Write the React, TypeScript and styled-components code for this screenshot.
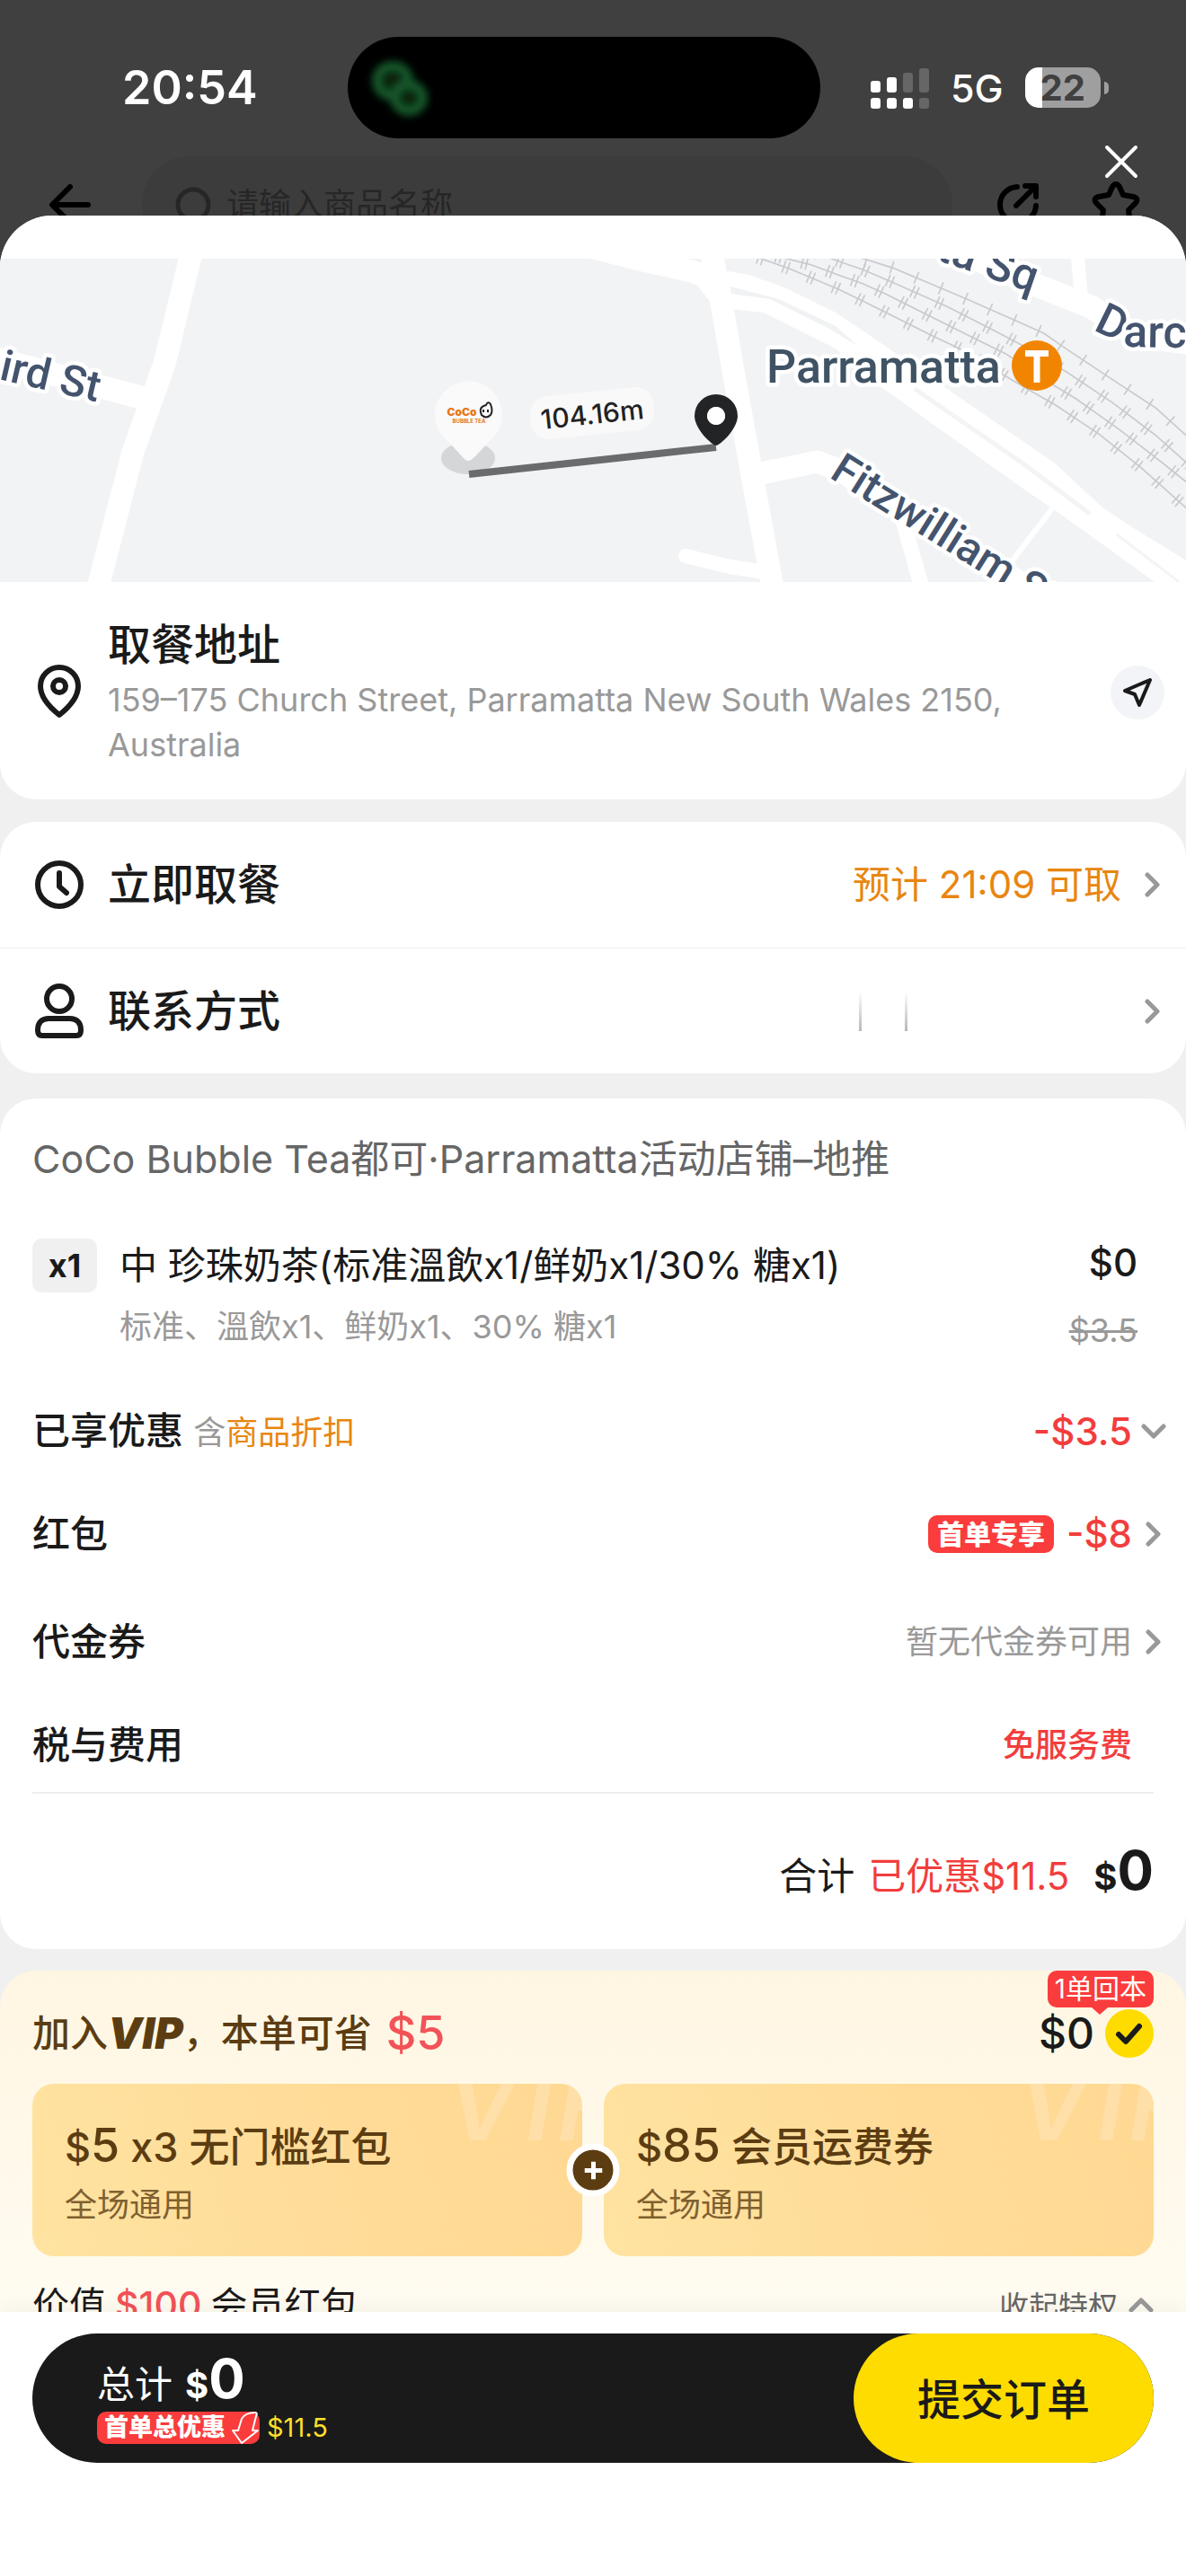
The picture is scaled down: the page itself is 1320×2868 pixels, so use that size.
import React from "react";
import styled, { createGlobalStyle, css } from "styled-components";

const ink = "#1a1a1a";
const muted = "#999999";
const red = "#f23d3d";
const tagRed = "#fa3c3c";
const brown = "#5c3d12";
const yellow = "#ffdc00";

const GlobalStyle = createGlobalStyle`
  * { box-sizing: border-box; }
  html, body { margin: 0; }
  body {
    background: #404040;
    color: ${ink};
    font-family: Inter, "Noto Sans CJK SC", sans-serif;
    -webkit-font-smoothing: antialiased;
  }
  button {
    border: 0;
    padding: 0;
    margin: 0;
    background: none;
    color: inherit;
    font: inherit;
    text-align: left;
    cursor: pointer;
  }
  p, h1, h2 { margin: 0; font: inherit; }
  svg { display: block; flex: none; }
`;

const Screen = styled.div`
  position: relative;
  display: flex;
  flex-direction: column;
  height: 100vh;
  overflow: hidden;
`;

/* ---------- dimmed page behind the sheet ---------- */

const Backdrop = styled.header`
  flex: none;
  height: 240px;
  overflow: hidden;
`;

const StatusBar = styled.div`
  display: grid;
  grid-template-columns: 1fr 526px 1fr;
  align-items: center;
  padding: 41px 20px 20px 0;
  color: #fff;
`;

const Clock = styled.time`
  padding-left: 136px;
  font-size: 52px;
  line-height: 60px;
  font-weight: 600;
`;

const Island = styled.div`
  display: flex;
  align-items: center;
  height: 113px;
  padding-left: 16px;
  border-radius: 57px;
  background: #000;
`;

const Signals = styled.div`
  display: flex;
  align-items: center;
  gap: 24px;
  padding-left: 56px;
`;

const Network = styled.span`
  font-size: 43px;
  line-height: 48px;
  font-weight: 500;
`;

const BatteryBox = styled.div`
  display: flex;
  align-items: center;
  gap: 4px;
`;

const Battery = styled.div`
  width: 84px;
  height: 45px;
  border-radius: 15px;
  background: linear-gradient(90deg, #fff 19px, #9f9f9f 19px);
  color: #404040;
  font-size: 40px;
  line-height: 45px;
  font-weight: 700;
  text-align: center;
`;

const BatteryTip = styled.span`
  width: 5px;
  height: 14px;
  border-radius: 0 7px 7px 0;
  background: #9f9f9f;
`;

const SearchBar = styled.div`
  display: flex;
  align-items: center;
  height: 108px;
  padding: 0 50px;
`;

const SearchBox = styled.label`
  flex: 1;
  display: flex;
  align-items: center;
  gap: 12px;
  height: 108px;
  margin: 0 44px 0 52px;
  padding-left: 36px;
  border-radius: 54px;
  background: #3c3c3c;
`;

const SearchInput = styled.input`
  flex: 1;
  min-width: 0;
  border: 0;
  padding: 0;
  outline: 0;
  background: none;
  font: inherit;
  font-size: 36px;
  line-height: 48px;
  color: #262626;
  &::placeholder { color: #262626; opacity: 1; }
`;

const HeaderTools = styled.div`
  display: flex;
  gap: 54px;
`;

const Close = styled.button`
  position: absolute;
  top: 156px;
  right: 48px;
`;

/* ---------- sheet ---------- */

const Sheet = styled.main`
  flex: 1;
  min-height: 0;
  display: flex;
  flex-direction: column;
  overflow: hidden;
  border-radius: 58px 58px 0 0;
  background: #f0f0f0;
`;

const Scroll = styled.div`
  flex: 1;
  min-height: 0;
  overflow-y: auto;
  scrollbar-width: none;
`;

const AddressCard = styled.section`
  padding-top: 48px;
  border-radius: 0 0 40px 40px;
  background: #fff;
`;

const MapSvg = styled.svg`
  width: 100%;
  height: 360px;
  background: #f2f3f5;
`;

const AddressRow = styled.div`
  display: flex;
  align-items: center;
  height: 242px;
  padding: 4px 24px 0 36px;
`;

const AddressText = styled.div`
  flex: 1;
  margin: 0 100px 0 24px;
`;

const Title = styled.h2`
  font-size: 48px;
  line-height: 60px;
  font-weight: 500;
`;

const Address = styled.p`
  margin-top: 6px;
  color: ${muted};
  font-size: 36px;
  line-height: 50px;
`;

const NavButton = styled.button`
  display: grid;
  place-items: center;
  width: 60px;
  height: 60px;
  border-radius: 50%;
  background: #f3f4f7;
`;

const Card = styled.section`
  margin-top: 25px;
  border-radius: 40px;
  background: #fff;
`;

const LinkRow = styled.button`
  display: flex;
  align-items: center;
  width: 100%;
  height: 140px;
  padding: 0 28px 0 36px;
  gap: 24px;
  & + & { border-top: 1px solid #f0f0f0; }
`;

const Pickup = styled.span`
  flex: 1;
  margin-right: 2px;
  color: #e8860f;
  font-size: 42px;
  line-height: 56px;
  text-align: right;
`;

const Contact = styled.span`
  flex: 1;
  display: flex;
  justify-content: flex-end;
  gap: 48px;
  padding-right: 240px;
`;

const Ghost = styled.i`
  width: 3px;
  height: 44px;
  background: linear-gradient(#fff, #b8b8b8);
`;

/* ---------- order ---------- */

const Order = styled(Card)`
  margin-top: 28px;
  padding: 37px 0 0;
`;

const Shop = styled.p`
  padding: 0 36px;
  color: #666;
  font-size: 43px;
  line-height: 60px;
`;

const Item = styled.div`
  display: flex;
  align-items: flex-start;
  padding: 59px 54px 32px 36px;
`;

const Count = styled.span`
  width: 72px;
  border-radius: 10px;
  background: #f0f0f0;
  font-size: 36px;
  line-height: 60px;
  font-weight: 700;
  text-align: center;
`;

const ItemText = styled.div`
  flex: 1;
  margin-left: 25px;
`;

const ItemName = styled.p`
  font-size: 42px;
  line-height: 60px;
`;

const ItemNote = styled.p`
  margin-top: 14px;
  color: ${muted};
  font-size: 36px;
  line-height: 48px;
`;

const ItemPrice = styled.div`
  text-align: right;
`;

const Price = styled.p`
  font-size: 42px;
  line-height: 54px;
  font-weight: 500;
`;

const OldPrice = styled.s`
  display: block;
  margin-top: 24px;
  color: ${muted};
  font-size: 36px;
  line-height: 48px;
`;

const rowBox = css<{ $h?: number }>`
  display: flex;
  align-items: center;
  width: 100%;
  height: ${(p) => p.$h ?? 114}px;
  padding: 0 20px 0 36px;
`;

const FeeButton = styled.button<{ $h?: number }>`${rowBox}`;
const FeeRow = styled.div<{ $h?: number }>`${rowBox}`;

const FeeName = styled.span`
  flex: 1;
  font-size: 42px;
  line-height: 56px;
  font-weight: 500;
`;

const FeeNote = styled.span<{ $accent?: boolean }>`
  color: ${(p) => (p.$accent ? "#e8860f" : muted)};
  font-size: 36px;
  font-weight: 400;
`;

const Minus = styled.span`
  color: ${red};
  font-size: 42px;
  line-height: 56px;
  font-weight: 500;
`;

const FeeValue = styled.span<{ $hot?: boolean }>`
  color: ${(p) => (p.$hot ? red : muted)};
  font-size: 36px;
  line-height: 48px;
  font-weight: ${(p) => (p.$hot ? 500 : 400)};
`;

const Slot = styled.span`
  display: grid;
  place-items: center;
  width: 32px;
  margin-left: 8px;
`;

const FirstTag = styled.span`
  margin-right: 14px;
  padding: 0 10px;
  border-radius: 10px;
  background: ${tagRed};
  color: #fff;
  font-size: 30px;
  line-height: 42px;
  font-weight: 900;
`;

const Rule = styled.hr`
  height: 2px;
  margin: 0 36px;
  border: 0;
  background: #eee;
`;

const Sum = styled.p`
  display: flex;
  align-items: baseline;
  justify-content: flex-end;
  gap: 15px;
  height: 173px;
  padding: 45px 36px 0;
  font-size: 42px;
  line-height: 80px;
`;

const Saved = styled.span`
  margin-right: 12px;
  color: ${red};
`;

const Amount = styled.span`
  font-size: 60px;
  font-weight: 700;
`;

const Dollar = styled.span<{ $size: number }>`
  font-size: ${(p) => p.$size}px;
`;

/* ---------- vip ---------- */

const Vip = styled.section`
  margin-top: 24px;
  padding: 0 36px;
  border-radius: 40px 40px 0 0;
  background: linear-gradient(#fff6e2, #fffcf2 400px);
`;

const VipHead = styled.div`
  position: relative;
  display: flex;
  align-items: center;
  height: 126px;
  padding-top: 14px;
`;

const VipTitle = styled.p`
  flex: 1;
  display: flex;
  align-items: center;
  color: ${brown};
  font-size: 42px;
  line-height: 56px;
  font-weight: 500;
`;

const VipMark = styled.b`
  font-size: 48px;
  font-weight: 900;
  font-style: italic;
`;

const VipSave = styled.span`
  margin-left: 16px;
  color: #f25358;
  font-size: 52px;
`;

const VipPrice = styled.span`
  margin-right: 12px;
  font-size: 48px;
  line-height: 48px;
  font-weight: 500;
`;

const Check = styled.span`
  display: grid;
  width: 54px;
  height: 54px;
  & > * { grid-area: 1 / 1; }
`;

const CheckInput = styled.input`
  appearance: none;
  width: 54px;
  height: 54px;
  margin: 0;
  border-radius: 50%;
  background: ${yellow};
`;

const CheckMark = styled.svg`
  place-self: center;
  pointer-events: none;
  z-index: 1;
`;

const Payback = styled.span`
  position: absolute;
  top: 0;
  right: 0;
  padding: 0 8px;
  border-radius: 10px;
  background: ${tagRed};
  color: #fff;
  font-size: 30px;
  line-height: 41px;
  &::after {
    content: "";
    position: absolute;
    left: 49px;
    top: 100%;
    border: 9px solid transparent;
    border-top: 8px solid ${tagRed};
    border-bottom: 0;
  }
`;

const Coupons = styled.div`
  position: relative;
  display: grid;
  grid-template-columns: 1fr 1fr;
  gap: 24px;
`;

const Coupon = styled.article`
  position: relative;
  height: 192px;
  padding: 34px 36px;
  overflow: hidden;
  border-radius: 24px;
  background: linear-gradient(70deg, #ffe3a1, #ffdb97 60%, #ffd993);
  color: ${brown};
`;

const CouponName = styled.p`
  display: flex;
  align-items: baseline;
  font-size: 45px;
  line-height: 70px;
  font-weight: 500;
  white-space: pre;
`;

const CouponNote = styled.p`
  color: #80602f;
  font-size: 36px;
  line-height: 58px;
`;

const Watermark = styled.span`
  position: absolute;
  top: -54px;
  right: -54px;
  color: rgba(255, 230, 190, 0.5);
  font-size: 130px;
  line-height: 140px;
  font-weight: 500;
  font-style: italic;
`;

const Plus = styled.span`
  position: absolute;
  left: 50%;
  top: 50%;
  display: grid;
  place-items: center;
  width: 59px;
  height: 59px;
  transform: translate(-50%, -50%);
  border: 7px solid #fff;
  border-radius: 50%;
  background: ${brown};
`;

const Worth = styled.div`
  display: flex;
  align-items: center;
  height: 108px;
`;

const WorthText = styled.p`
  flex: 1;
  display: flex;
  gap: 10px;
  font-size: 41px;
  line-height: 56px;
`;

const Hundred = styled.span`
  color: #f25358;
  font-weight: 500;
`;

const Fold = styled.button`
  display: flex;
  align-items: center;
  gap: 12px;
  color: #666;
  font-size: 33px;
`;

/* ---------- footer ---------- */

const Footer = styled.footer`
  flex: none;
  position: relative;
  height: 294px;
  padding: 24px 36px;
  background: #fff;
  box-shadow: 0 -4px 24px rgba(0, 0, 0, 0.05);
`;

const Pill = styled.div`
  display: flex;
  justify-content: space-between;
  height: 144px;
  border-radius: 72px;
  background: ${ink};
  color: #fff;
`;

const Totals = styled.div`
  display: flex;
  flex-direction: column;
  padding: 17px 0 0 72px;
`;

const TotalLine = styled.p`
  display: flex;
  align-items: baseline;
  gap: 14px;
  height: 70px;
  font-size: 42px;
  line-height: 67px;
`;

const SavedLine = styled.p`
  display: flex;
  align-items: center;
  gap: 8px;
  color: #ffdf2b;
  font-size: 29px;
  line-height: 36px;
`;

const SavedTag = styled.span`
  display: flex;
  align-items: center;
  gap: 4px;
  height: 36px;
  padding-left: 8px;
  border-radius: 10px;
  background: ${tagRed};
  color: #fff;
  font-size: 27px;
  font-weight: 900;
`;

const Submit = styled.button`
  width: 334px;
  padding-bottom: 4px;
  border-radius: 72px;
  background: ${yellow};
  color: ${ink};
  font-size: 48px;
  font-weight: 500;
  text-align: center;
`;

const chevrons = {
  right: { w: 18, h: 28, d: "M3 3 L14 14 L3 25" },
  down: { w: 28, h: 18, d: "M3 3 L14 14 L25 3" },
  up: { w: 28, h: 18, d: "M3 15 L14 4 L25 15" },
};

function Chevron({ dir = "right" }: { dir?: keyof typeof chevrons }) {
  const { w, h, d } = chevrons[dir];
  return (
    <svg width={w} height={h} viewBox={`0 0 ${w} ${h}`} aria-hidden="true">
      <path d={d} fill="none" stroke="#999" strokeWidth="5" strokeLinecap="round" strokeLinejoin="round" />
    </svg>
  );
}

const signalBars = [
  { h: 13, top: "#fff", low: "#fff" },
  { h: 17, top: "#fff", low: "#fff" },
  { h: 22, top: "#666", low: "#fff" },
  { h: 27, top: "#666", low: "#666" },
];

function Signal() {
  return (
    <svg width="65" height="46" viewBox="0 0 65 46" aria-hidden="true">
      {signalBars.map((b, i) => (
        <g key={i}>
          <rect x={i * 18} y={28 - b.h} width="11" height={b.h} rx="3" fill={b.top} />
          <rect x={i * 18} y="34" width="11" height="12" rx="3" fill={b.low} />
        </g>
      ))}
    </svg>
  );
}

const rails = [
  { d: "M-160 -40 L0 8 L102 40 L350 145 L520 220 L605 258 L680 310 L830 410 L980 508 L1090 608", dash: "5 84" },
  { d: "M-170 -15 L-45 30 L0 45 L120 97 L285 170 L445 252 L570 318 L685 390 L835 490 L980 600 L1090 698", dash: "5 10 5 70" },
  { d: "M-290 0 L-170 30 L-90 60 L0 92 L77 127 L237 207 L398 287 L480 328 L640 433 L713 477 L858 580 L1000 690 L1090 762", dash: "5 10 5 69" },
  { d: "M-350 5 L-245 42 L-82 110 L0 150 L80 190 L240 270 L325 310 L475 400 L560 450 L640 495 L790 595 L930 707 L1090 850", dash: "5 10 5 70" },
];

function Map() {
  return (
    <MapSvg viewBox="0 0 1320 360" preserveAspectRatio="xMidYMid slice" role="img" aria-label="地图">
      <g fill="none" stroke="#fff" strokeLinejoin="round">
        <path d="M213 -6 L183 117 L148 215 L109 366" strokeWidth="25" />
        <path d="M-10 110 L170 158" strokeWidth="26" />
        <path d="M792 -6 L803 50 L817 130 L835 230 L860 366" strokeWidth="25" />
        <path d="M600 -28 L703 -1 L770 14 L812 30" strokeWidth="25" />
        <path d="M842 240 L910 226 L935 236 L1170 382" strokeWidth="25" />
        <path d="M1004 288 L1026 366" strokeWidth="17" />
        <path d="M1172 277 L1120 345" strokeWidth="6" />
        <path d="M763 331 L813 343 L850 349" strokeWidth="16" strokeLinecap="round" />
        <path d="M1040 -20 L1147 27 L1215 54 L1265 86 L1340 96" strokeWidth="26" />
        <path d="M1199 -6 L1204 48" strokeWidth="15" />
      </g>
      <path
        fill="#fff"
        d="M805 13 L833 18 L873 32 L930 60 L960 80 L1173 227 L1227 277 L1260 299 L1322 337 L1322 362 L1288 362 L1173 279 L1140 257 L960 128 L930 100 L850 60 L812 56 Z M774 27 L792 50 L804 27 Z"
      />
      <path fill="#f1f2f4" d="M813 31 L867 45 L930 75 L956 98 L923 78 L857 45 L814 39 Z" />
      <g fill="none" stroke="#f3f4f6">
        <path d="M1018 145 L1140 229 L1213 284" strokeWidth="5" />
        <path d="M1243 307 L1315 362" strokeWidth="3" />
      </g>
      <g transform="translate(960 -3) scale(0.3333)" fill="none" stroke="#c9cacd">
        {rails.map((r) => (
          <g key={r.d}>
            <path d={r.d} strokeWidth="5" />
            <path d={r.d} strokeWidth="42" strokeDasharray={r.dash} />
          </g>
        ))}
      </g>
      <g
        fontFamily="Roboto, sans-serif"
        fontWeight="500"
        fill="#44546e"
        stroke="#fff"
        strokeWidth="9"
        strokeLinejoin="round"
        paintOrder="stroke"
      >
        <text x="-2" y="134" fontSize="48" transform="rotate(13 -2 134)">ird St</text>
        <text x="853" y="138" fontSize="52" fill="#3f5364">Parramatta</text>
        <text x="922" y="243" fontSize="48" transform="rotate(32 922 243)">Fitzwilliam St</text>
        <text x="1149" y="38" fontSize="50" textAnchor="end" transform="rotate(19 1149 38)">ta Sq</text>
        <text x="1216" y="79" fontSize="50" transform="rotate(26 1216 79)">D</text>
        <text x="1250" y="98" fontSize="50" transform="rotate(1 1250 98)">arc</text>
      </g>
      <circle cx="1154" cy="119" r="28" fill="#f28500" />
      <path d="M1141 105.500 H1167 M1154 105.500 V138" fill="none" stroke="#fff" strokeWidth="7" />
      <ellipse cx="521" cy="222" rx="30" ry="18" fill="#d5d6d8" />
      <path d="M521 225 C516 225 508 211 492 197 A37.500 37.500 0 1 1 551 197 C536 211 527 225 521 225 Z" fill="#fafafa" />
      <path d="M522 240 L797 210" stroke="#6a6b6d" strokeWidth="8" />
      <g fontFamily="Inter, sans-serif" textAnchor="middle" fill="#e8761c">
        <text x="514" y="175" fontSize="12" fontWeight="900">CoCo</text>
        <text x="522" y="183" fontSize="6" fontWeight="700">BUBBLE TEA</text>
      </g>
      <g fill="none" stroke="#222" strokeWidth="2">
        <path d="M541 163 Q543 158 546 162 Q549 170 546 174 Q541 179 536 174 Q532 165 541 163 Z" />
        <path d="M538 168 v3 M543 168 v3" />
      </g>
      <g transform="rotate(-6 659 172)">
        <rect x="590" y="148" width="138" height="48" rx="20" fill="#f9f9fa" />
        <text x="659" y="184" fontFamily="Inter, sans-serif" fontSize="30" fontWeight="500" fill="#222" textAnchor="middle">
          104.16m
        </text>
      </g>
      <path
        fillRule="evenodd"
        fill="#232426"
        d="M797 208 C793 208 773 190 773 175 A24 24 0 1 1 821 175 C821 190 801 208 797 208 Z M797 165 a10 10 0 1 0 0.010 0 Z"
      />
      <circle cx="797" cy="175" r="10" fill="#fff" />
    </MapSvg>
  );
}

export default function App() {
  return (
    <Screen lang="zh-CN">
      <GlobalStyle />
      <Backdrop>
        <StatusBar>
          <Clock>20:54</Clock>
          <Island>
            <svg width="80" height="84" viewBox="0 0 80 84" aria-hidden="true">
              <defs>
                <filter id="soft" x="-30%" y="-30%" width="160%" height="160%">
                  <feGaussianBlur stdDeviation="4" />
                </filter>
              </defs>
              <g fill="#08240f" stroke="#12592a" strokeWidth="10" filter="url(#soft)">
                <ellipse cx="34" cy="34" rx="18" ry="17" />
                <ellipse cx="52" cy="53" rx="16" ry="15" />
              </g>
            </svg>
          </Island>
          <Signals>
            <Signal />
            <Network>5G</Network>
            <BatteryBox>
              <Battery>22</Battery>
              <BatteryTip />
            </BatteryBox>
          </Signals>
        </StatusBar>
        <SearchBar>
          <button aria-label="返回">
            <svg width="56" height="56" viewBox="0 0 56 56">
              <path d="M9 28 H48 M28 8 L8 28 L28 48" fill="none" stroke="#000" strokeWidth="6" strokeLinecap="round" strokeLinejoin="round" />
            </svg>
          </button>
          <SearchBox>
            <svg width="46" height="46" viewBox="0 0 46 46" aria-hidden="true">
              <circle cx="21" cy="23" r="17" fill="none" stroke="#262626" strokeWidth="5" />
            </svg>
            <SearchInput aria-label="搜索商品" placeholder="请输入商品名称" />
          </SearchBox>
          <HeaderTools>
            <button aria-label="分享">
              <svg width="56" height="56" viewBox="0 0 56 56">
                <path d="M28 8 A20 20 0 1 0 49 29 M27 29 L48 8 M37 7 H49 V19" fill="none" stroke="#000" strokeWidth="6" strokeLinecap="round" strokeLinejoin="round" />
              </svg>
            </button>
            <button aria-label="收藏">
              <svg width="56" height="56" viewBox="0 0 56 56">
                <path
                  d="M24 8 Q28 2 32 8 L36 17 L47 19 Q54 21 50 26 L42 34 L44 48 Q43 53 38 50 L28 45 L18 50 Q13 53 12 48 L14 34 L6 26 Q2 21 9 19 L20 17 Z"
                  fill="none"
                  stroke="#000"
                  strokeWidth="6"
                  strokeLinejoin="round"
                />
              </svg>
            </button>
          </HeaderTools>
        </SearchBar>
      </Backdrop>
      <Close aria-label="关闭">
        <svg width="48" height="48" viewBox="0 0 48 48">
          <path d="M8 8 L40 40 M40 8 L8 40" stroke="#fff" strokeWidth="4" strokeLinecap="round" />
        </svg>
      </Close>

      <Sheet>
        <Scroll>
          <AddressCard>
            <Map />
            <AddressRow>
              <svg width="60" height="64" viewBox="0 0 60 64" aria-hidden="true">
                <path d="M30 57 C20 49 9 37 9 25 A21 21 0 0 1 51 25 C51 37 40 49 30 57 Z" fill="none" stroke={ink} strokeWidth="6" strokeLinejoin="round" />
                <circle cx="30" cy="25" r="7" fill="none" stroke={ink} strokeWidth="6" />
              </svg>
              <AddressText>
                <Title>取餐地址</Title>
                <Address>159–175 Church Street, Parramatta New South Wales 2150, Australia</Address>
              </AddressText>
              <NavButton aria-label="导航">
                <svg width="36" height="36" viewBox="0 0 36 36">
                  <path d="M32 4 L4 16 L15 20 L20 32 Z" fill="none" stroke={ink} strokeWidth="4" strokeLinejoin="round" />
                </svg>
              </NavButton>
            </AddressRow>
          </AddressCard>

          <Card>
            <LinkRow>
              <svg width="60" height="60" viewBox="0 0 60 60" aria-hidden="true">
                <circle cx="30" cy="30" r="24" fill="none" stroke={ink} strokeWidth="6" />
                <path d="M30 17 V32 L38 39" fill="none" stroke={ink} strokeWidth="6" strokeLinecap="round" strokeLinejoin="round" />
              </svg>
              <Title as="span">立即取餐</Title>
              <Pickup>预计 21:09 可取</Pickup>
              <Chevron />
            </LinkRow>
            <LinkRow>
              <svg width="60" height="62" viewBox="0 0 60 62" aria-hidden="true">
                <circle cx="30" cy="17" r="14" fill="none" stroke={ink} strokeWidth="6" />
                <path d="M6 52 C6 42 12 39 18 39 H42 C48 39 54 42 54 52 Q54 58 49 58 H11 Q6 58 6 52 Z" fill="none" stroke={ink} strokeWidth="6" />
              </svg>
              <Title as="span">联系方式</Title>
              <Contact>
                <Ghost />
                <Ghost />
              </Contact>
              <Chevron />
            </LinkRow>
          </Card>

          <Order>
            <Shop>CoCo Bubble Tea都可·Parramatta活动店铺–地推</Shop>
            <Item>
              <Count>x1</Count>
              <ItemText>
                <ItemName>中 珍珠奶茶(标准溫飲x1/鲜奶x1/30% 糖x1)</ItemName>
                <ItemNote>标准、溫飲x1、鲜奶x1、30% 糖x1</ItemNote>
              </ItemText>
              <ItemPrice>
                <Price>$0</Price>
                <OldPrice>$3.5</OldPrice>
              </ItemPrice>
            </Item>
            <FeeButton>
              <FeeName>
                已享优惠 <FeeNote>含</FeeNote>
                <FeeNote $accent>商品折扣</FeeNote>
              </FeeName>
              <Minus>-$3.5</Minus>
              <Slot><Chevron dir="down" /></Slot>
            </FeeButton>
            <FeeButton>
              <FeeName>红包</FeeName>
              <FirstTag>首单专享</FirstTag>
              <Minus>-$8</Minus>
              <Slot><Chevron /></Slot>
            </FeeButton>
            <FeeButton $h={126}>
              <FeeName>代金券</FeeName>
              <FeeValue>暂无代金券可用</FeeValue>
              <Slot><Chevron /></Slot>
            </FeeButton>
            <FeeRow $h={104}>
              <FeeName>税与费用</FeeName>
              <FeeValue $hot>免服务费</FeeValue>
              <Slot />
            </FeeRow>
            <Rule />
            <Sum>
              <span>合计</span>
              <Saved>已优惠$11.5</Saved>
              <Amount><Dollar $size={40}>$</Dollar>0</Amount>
            </Sum>
          </Order>

          <Vip>
            <VipHead>
              <VipTitle>
                加入<VipMark>VIP</VipMark>，本单可省<VipSave>$5</VipSave>
              </VipTitle>
              <VipPrice>$0</VipPrice>
              <Check>
                <CheckInput type="checkbox" defaultChecked aria-label="加入VIP" />
                <CheckMark width="34" height="34" viewBox="0 0 34 34" aria-hidden="true">
                  <path d="M5 18 L13 26 L28 9" fill="none" stroke={ink} strokeWidth="6" strokeLinecap="round" strokeLinejoin="round" />
                </CheckMark>
              </Check>
              <Payback>1单回本</Payback>
            </VipHead>
            <Coupons>
              <Coupon>
                <Watermark aria-hidden="true">VIP</Watermark>
                <CouponName><span>$</span><Dollar $size={52}>5</Dollar> x3 无门槛红包</CouponName>
                <CouponNote>全场通用</CouponNote>
              </Coupon>
              <Coupon>
                <Watermark aria-hidden="true">VIP</Watermark>
                <CouponName><span>$</span><Dollar $size={52}>85</Dollar> 会员运费券</CouponName>
                <CouponNote>全场通用</CouponNote>
              </Coupon>
              <Plus>
                <svg width="20" height="20" viewBox="0 0 20 20" aria-hidden="true">
                  <path d="M10 0 V20 M0 10 H20" stroke="#fff" strokeWidth="5" />
                </svg>
              </Plus>
            </Coupons>
            <Worth>
              <WorthText>
                价值<Hundred>$100</Hundred>会员红包
              </WorthText>
              <Fold>
                收起特权
                <Chevron dir="up" />
              </Fold>
            </Worth>
          </Vip>
        </Scroll>

        <Footer>
          <Pill>
            <Totals>
              <TotalLine>
                总计 <Amount><Dollar $size={40}>$</Dollar>0</Amount>
              </TotalLine>
              <SavedLine>
                <SavedTag>
                  首单总优惠
                  <svg width="34" height="36" viewBox="0 0 34 36" aria-hidden="true">
                    <path d="M14 8 Q18 1 29 1 Q32 1 30 5 L26 21 H32 L14 35 L4 21 H10 Z" fill={tagRed} stroke="#fff" strokeWidth="2" strokeLinejoin="round" />
                  </svg>
                </SavedTag>
                $11.5
              </SavedLine>
            </Totals>
            <Submit>提交订单</Submit>
          </Pill>
        </Footer>
      </Sheet>
    </Screen>
  );
}
